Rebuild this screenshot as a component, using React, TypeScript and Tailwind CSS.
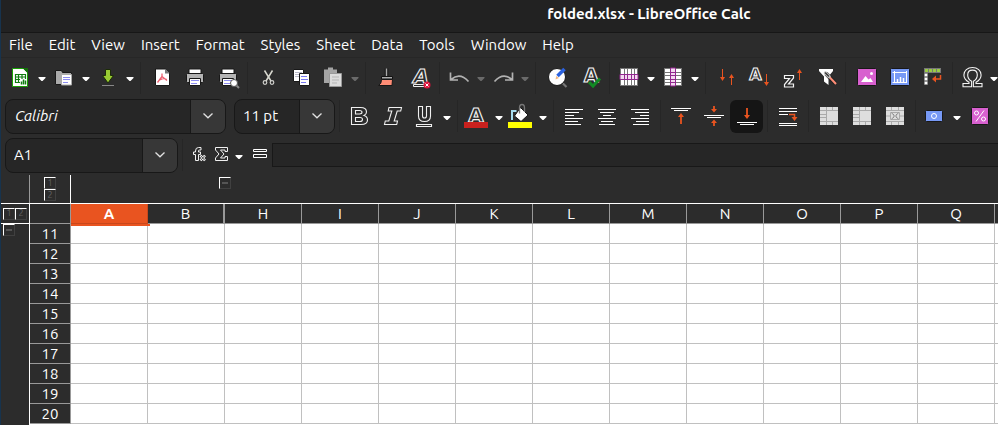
import type { ReactNode } from "react";

const menus = ["File", "Edit", "View", "Insert", "Format", "Styles", "Sheet", "Data", "Tools", "Window", "Help"];
const columns = ["A", "B", "H", "I", "J", "K", "L", "M", "N", "O", "P", "Q"];
const rows = [11, 12, 13, 14, 15, 16, 17, 18, 19, 20];

function Tool({ label, active, children }: { label: string; active?: boolean; children: ReactNode }) {
  return (
    <button
      type="button"
      aria-label={label}
      title={label}
      className={`shrink-0 rounded-md ${active ? "bg-[#151515]" : ""}`}
    >
      <svg width="33" height="33" viewBox="0 0 33 33" fill="none" className="block">
        {children}
      </svg>
    </button>
  );
}

function Drop({ label, dim }: { label: string; dim?: boolean }) {
  return (
    <button type="button" aria-label={label} className="shrink-0">
      <svg width="11" height="33" viewBox="0 0 11 33" className="block">
        <path d="M1.500 16h7v1l-3 3h-1l-3-3z" fill={dim ? "#6a6a6a" : "#fff"} />
      </svg>
    </button>
  );
}

function Sep() {
  return (
    <div className="flex h-8 w-2 shrink-0 justify-center">
      <div className="w-px bg-[#262626]" />
    </div>
  );
}

function Combo({ label, value, className, italic, pad }: { label: string; value: string; className: string; italic?: boolean; pad: string }) {
  return (
    <div className={`flex h-[35px] shrink-0 overflow-hidden rounded-lg border border-[#181818] bg-[#262626] ${className}`}>
      <input
        aria-label={label}
        defaultValue={value}
        className={`min-w-0 flex-1 bg-transparent text-[15px] text-white outline-none ${pad} ${italic ? "italic" : ""}`}
      />
      <button type="button" aria-label={`${label} list`} className="flex w-[35px] items-center justify-center border-l border-[#181818] bg-[#373737]">
        <svg width="12" height="8" viewBox="0 0 12 8" fill="none">
          <path d="M1.500 1.500 6 5.800l4.500-4.300" stroke="#e0e0e0" strokeWidth="1.300" />
        </svg>
      </button>
    </div>
  );
}

function Outlined({ x, y, size, children, italic }: { x: number; y: number; size: number; children: string; italic?: boolean }) {
  return (
    <text
      x={x}
      y={y}
      fontSize={size}
      fontWeight="bold"
      fontStyle={italic ? "italic" : "normal"}
      fontFamily="'DejaVu Sans', sans-serif"
      textAnchor="middle"
      fill="#2c2c2c"
      stroke="#f4f4f4"
      strokeWidth="1.1"
    >
      {children}
    </text>
  );
}

function Lines({ items }: { items: [number, number, number][] }) {
  return (
    <>
      {items.map(([x, y, w]) => (
        <rect key={`${x}-${y}`} x={x} y={y} width={w} height="1" fill="#fff" />
      ))}
    </>
  );
}

function Printer() {
  return (
    <>
      <path d="M12 13V8h12v5" fill="#fff" stroke="#181818" />
      <rect x="9.5" y="12.5" width="17" height="9" rx="1" fill="#b4b4b4" stroke="#181818" />
      <path d="M12.500 17.500h11v7h-11z" fill="#fff" stroke="#181818" />
      <path d="M14 19.500h8M14 22.500h6" stroke="#8d8df0" />
    </>
  );
}

function MergeGrid({ variant }: { variant: "merge" | "split" | "center" }) {
  return (
    <>
      <rect x="8" y="7" width="18" height="18" fill="#dedede" />
      {variant === "center" ? (
        <>
          <path d="M8 10.500h18M8 21.500h18M13.500 7v4M20.500 7v4M13.500 21v4M20.500 21v4M8 16h5M21 16h5" stroke="#aaa" />
          <path d="M12.500 12.500h9v7h-9z" stroke="#aaa" />
          <path d="M13.500 13l2.500 2v2l-2.500 2M20.500 13l-2.500 2v2l2.500 2" stroke="#888" />
        </>
      ) : (
        <path
          d={variant === "merge" ? "M8 10.500h18M8 21.500h18M14.500 7v18M20.500 7v4M20.500 21v4M8 14.500h6M8 17.500h6" : "M8 10.500h18M8 21.500h18M14.500 7v18M20.500 7v4M20.500 21v4M8 14.500h6M8 17.500h6"}
          stroke="#aaa"
        />
      )}
    </>
  );
}

function MainToolbar() {
  return (
    <div className="flex h-[39px] items-center overflow-hidden pl-[3px]">
      <Tool label="New">
        <path d="M9 7.500h10.500l4 4V25q0 .5-.5.500H9q-.5 0-.5-.5V8q0-.5.5-.5z" fill="#fff" stroke="#18a303" />
        <path d="M18.500 7h5.500v5.500z" fill="#146f0a" />
        <path d="M11.500 13.500h10v8h-10zM11.500 16h10M11.500 18.500h10M14.500 13.500v8M18 13.500v8" stroke="#107c10" strokeWidth="1.200" />
        <path d="M16 18h7v6h-7z" fill="#fff" />
        <path d="M17.500 23.500v-3M19.500 23.500v-5M21.500 23.500v-4" stroke="#107c10" strokeWidth="1.500" />
      </Tool>
      <Drop label="New options" />
      <Tool label="Open">
        <path d="M7.500 9.500h6l1 2h9v12h-16z" fill="#aaa" stroke="#181818" />
        <path d="M13.500 13.500h10v10.500h-10z" fill="#fff" stroke="#aaa" />
        <path d="M15 16.500h7M15 18.500h7M15 21.500h5" stroke="#8d8df0" />
      </Tool>
      <Drop label="Open options" />
      <Tool label="Save">
        <path d="M13.500 8.500h5v6h3L16 22l-5.500-7.500h3z" fill="#99cc33" stroke="#1c2c08" />
        <path d="M10 24.500h12" stroke="#888" />
      </Tool>
      <Drop label="Save options" />
      <Sep />
      <Tool label="Export as PDF">
        <path d="M11.500 8h10l4 4v12.500h-14z" fill="#fff" stroke="#181818" />
        <path d="M21 8v4.500h4.500z" fill="#777" />
        <path d="M18 12.500v3l-4.500 6M18 15.500l5 4M15.500 19l4-1.500 3.500 1" stroke="#ed6070" strokeWidth="1.300" />
      </Tool>
      <Tool label="Print"><Printer /></Tool>
      <Tool label="Print Preview">
        <Printer />
        <path d="m26 24 3 3" stroke="#888" strokeWidth="2" />
        <circle cx="24" cy="22" r="3.500" fill="#fff" stroke="#555" />
      </Tool>
      <Sep />
      <Tool label="Cut">
        <path d="M13.500 9.500 20 20M21.500 9.500 15 20" stroke="#d8d8cf" strokeWidth="1.500" />
        <circle cx="14" cy="21.500" r="1.800" stroke="#d0d0cc" strokeWidth="1.200" />
        <circle cx="21" cy="21.500" r="1.800" stroke="#d0d0cc" strokeWidth="1.200" />
      </Tool>
      <Tool label="Copy">
        <path d="M9.500 8.500h10v12h-10z" fill="#fff" stroke="#181818" />
        <path d="M11 11.500h7M11 13.500h7M11 15.500h5" stroke="#b9b9c9" />
        <path d="M15.500 12.500h10v12h-10z" fill="#fff" stroke="#181818" />
        <path d="M17 15.500h6M17 18.500h7M17 21.500h5" stroke="#7878f0" />
      </Tool>
      <Tool label="Paste">
        <path d="M7 8.500h4v-2h5v2h4V22H7z" fill="#a5a5a5" />
        <path d="M12.500 12.500h12v13h-12z" fill="#dcdcdc" stroke="#999" />
        <path d="M15 16h7M15 19h7M15 22h5" stroke="#b5b5b5" />
      </Tool>
      <Drop label="Paste options" dim />
      <Sep />
      <Tool label="Clone Formatting">
        <path d="M17.500 7.500v8" stroke="#111" strokeWidth="3.500" />
        <path d="M17.500 7.500v8" stroke="#aaa" strokeWidth="1.500" />
        <path d="M12.500 15.500h11v2.500h-11z" fill="#aaa" stroke="#111" />
        <path d="M12.500 18.500h11l-.5 6H9.500q3-1.500 3-6z" fill="#ff8d76" stroke="#181818" />
      </Tool>
      <Tool label="Clear Direct Formatting">
        <Outlined x={19} y={22} size={20} italic>A</Outlined>
        <path d="M11.500 23.500h12v2h-12z" stroke="#eee" />
        <circle cx="25" cy="24" r="3.500" fill="#dc143c" />
        <path d="m23.500 22.500 3 3m0-3-3 3" stroke="#fff" />
      </Tool>
      <Sep />
      <Tool label="Undo"><path d="M7.500 11.500v7.500h7.500M8 18.500q9-7.500 17.500 2" stroke="#b2b2b2" strokeWidth="1.700" /></Tool>
      <Drop label="Undo history" dim />
      <Tool label="Redo"><path d="M25.500 11.500v7.500h-7.500M25 18.500q-9-7.500-17.500 2" stroke="#b2b2b2" strokeWidth="1.700" /></Tool>
      <Drop label="Redo history" dim />
      <Sep />
      <Tool label="Find and Replace">
        <path d="m23.500 22 4 4" stroke="#777" strokeWidth="2.200" />
        <circle cx="18" cy="16" r="8.500" fill="#fff" stroke="#181818" />
        <path d="m18.500 15 7-7" stroke="#2b62df" strokeWidth="3.500" />
        <path d="m16.500 18.500.8-3.500 2.700 2z" fill="#f5b77d" />
      </Tool>
      <Tool label="Spelling">
        <Outlined x={19} y={21} size={19}>A</Outlined>
        <path d="m17 21 4 4 7-7.500" stroke="#128a24" strokeWidth="3" />
      </Tool>
      <Sep />
      <Tool label="Row">
        <rect x="7" y="7" width="18" height="18" fill="#fff" />
        <path d="M7 7.500h18M7 24.500h18M7.500 7v18M11.500 7v18M14.500 7v18M18.500 7v18M21.500 7v18M24.500 7v18" stroke="#777" />
        <path d="M7 13.500h18v5H7z" fill="#f3d9f0" stroke="#92278f" />
        <path d="M11.500 13v6M14.500 13v6M18.500 13v6M21.500 13v6" stroke="#92278f" />
      </Tool>
      <Drop label="Row options" />
      <Tool label="Column">
        <rect x="7" y="7" width="18" height="18" fill="#fff" />
        <path d="M7 7.500h18M7 11.500h18M7 14.500h18M7 18.500h18M7 21.500h18M7 24.500h18M7.500 7v18M24.500 7v18" stroke="#777" />
        <path d="M13.500 7v18h5V7z" fill="#f3d9f0" stroke="#92278f" />
        <path d="M13 11.500h6M13 14.500h6M13 18.500h6M13 21.500h6" stroke="#92278f" />
      </Tool>
      <Drop label="Column options" />
      <Sep />
      <Tool label="Sort">
        <path d="M13.500 8v8M22.500 16v8" stroke="#e95420" />
        <path d="M11 16h5l-2.500 4zM20 17h5l-2.500-4z" fill="#e95420" />
      </Tool>
      <Tool label="Sort Ascending">
        <Outlined x={13.5} y={19} size={16}>A</Outlined>
        <path d="M24.500 13v9" stroke="#e95420" />
        <path d="M22 21h5l-2.500 4z" fill="#e95420" />
      </Tool>
      <Tool label="Sort Descending">
        <path d="M9.500 14.500h9v2.500l-5 6h5v3h-9v-2.500l5-6h-5z" stroke="#f4f4f4" strokeWidth="1.200" />
        <path d="M24.500 12v7" stroke="#e95420" />
        <path d="M22 12h5l-2.500-4z" fill="#e95420" />
      </Tool>
      <Tool label="AutoFilter">
        <path d="M11 8h14v2l-4.500 5.500V24L16 20.500v-5L11 10z" fill="#fff" />
        <path d="m18 12.500 9.500 10" stroke="#222" strokeWidth="4" />
        <path d="m19.500 14 8.500 9" stroke="#ff8d76" strokeWidth="2" />
        <path d="m17.500 12 3.500 3.500" stroke="#bbb" strokeWidth="3.500" strokeLinecap="round" />
        <path d="m17.500 12 3 3" stroke="#333" strokeWidth="1.300" strokeLinecap="round" />
      </Tool>
      <Sep />
      <Tool label="Insert Image">
        <rect x="8.500" y="7.500" width="19" height="17" rx="1" fill="#d860cf" stroke="#181818" />
        <path d="m12 21 4.500-6 3 3.500 2-1.500 2.500 4z" fill="#fff" />
        <circle cx="22.500" cy="12.500" r="1.500" fill="#fff" />
      </Tool>
      <Tool label="Insert Chart">
        <rect x="8.500" y="7.500" width="19" height="17" rx="1" fill="#7799f5" stroke="#181818" />
        <path d="M12.500 10v12M10.500 21.500h14M10.500 11.500h14.500M24.500 10v12" stroke="#fff" />
        <path d="M15.500 21v-3M18.500 21v-5M21.500 21v-4" stroke="#fff" strokeWidth="1.500" />
      </Tool>
      <Tool label="Pivot Table">
        <path d="M9 7h17v5H13v12H9z" fill="#777" />
        <path d="M10 13h2v2h-2zM10 17h2v2h-2zM10 21h2v2h-2z" fill="#fff" stroke="#fff" strokeWidth=".5" />
        <path d="M10 8h3v3h-3zM14 8h3v3h-3zM18 8h3v3h-3zM22 8h3v3h-3z" fill="#9acb45" />
        <path d="M25.500 14v4h-6" stroke="#e95420" strokeWidth="1.500" />
        <path d="M21 14.500v7L17 18z" fill="#e95420" />
      </Tool>
      <Sep />
      <Tool label="Special Character">
        <path
          d="M7 22.500h6v-1.300C9.800 19.500 7.900 17 7.900 14c0-4.400 3.600-7.500 8.600-7.500s8.600 3.100 8.600 7.500c0 3-1.900 5.500-5.100 7.200v1.300h6v3.200h-8.600v-5.400c2.500-1.400 3.900-3.500 3.900-6.300 0-3.100-1.900-4.900-4.800-4.900s-4.800 1.800-4.800 4.900c0 2.800 1.400 4.900 3.900 6.300v5.400H7z"
          stroke="#f2f2f2"
          strokeWidth="1.100"
        />
      </Tool>
      <Drop label="Special characters" />
    </div>
  );
}

function FormatToolbar() {
  return (
    <div className="flex h-[38px] items-center overflow-hidden pl-1">
      <Combo label="Font Name" value="Calibri" className="mr-2 w-[221px]" pad="pl-[9px]" italic />
      <Combo label="Font Size" value="11 pt" className="w-[101px]" pad="pl-2" />
      <Sep />
      <Tool label="Bold">
        <path
          d="M8.500 7.500h9q6 0 6 4.500 0 2.500-2.500 3.500 3.500 1 3.500 4.500 0 4.500-6.500 4.500h-9.500zM12.500 10.500v3.500h4q2.500 0 2.500-1.700t-2.500-1.800zM12.500 17.500v4h4.500q2.500 0 2.500-2t-2.500-2z"
          stroke="#f0f0f0"
          strokeWidth="1.100"
        />
      </Tool>
      <Tool label="Italic">
        <path d="M13 7.500h12.500l-.8 3.500h-3.500l-3 10h3.300l-.8 3.500H8.500l.8-3.500h3.500l3-10h-3.600z" stroke="#f0f0f0" strokeWidth="1.100" />
      </Tool>
      <Tool label="Underline">
        <path d="M9.500 6.500h4v9.500q0 2 2 2t2-2V6.500h4V16q0 5.500-6 5.500t-6-5.500z" stroke="#f0f0f0" strokeWidth="1.100" />
        <path d="M7.500 24.500h15v2h-15z" stroke="#f0f0f0" strokeWidth="1.100" />
      </Tool>
      <Drop label="Underline styles" />
      <Sep />
      <Tool label="Font Color">
        <Outlined x={15} y={22} size={20}>A</Outlined>
        <rect x="3" y="22" width="24" height="6" fill="#c9211e" />
      </Tool>
      <Drop label="Font colors" />
      <Tool label="Highlighting">
        <rect x="3" y="22" width="24" height="6" fill="#ff0" />
        <path d="M7 20v-9h4.500" stroke="#a5dbee" strokeWidth="2" />
        <path d="m15.500 7.500 7.500 7.500-7 6.500-6.500-5.500z" fill="#fff" stroke="#181818" />
        <path d="M14.500 13.500V8q0-3.500 2.500-3.500T19.500 8v4" stroke="#777" strokeWidth="1.300" />
      </Tool>
      <Drop label="Highlight colors" />
      <Sep />
      <Tool label="Align Left"><Lines items={[[8, 9, 18], [8, 12, 14], [8, 15, 9], [8, 18, 18], [8, 21, 13], [8, 24, 16]]} /></Tool>
      <Tool label="Center Horizontally"><Lines items={[[8, 9, 18], [10, 12, 14], [13, 15, 8], [8, 18, 18], [11, 21, 12], [9, 24, 16]]} /></Tool>
      <Tool label="Align Right"><Lines items={[[8, 9, 18], [12, 12, 14], [17, 15, 9], [8, 18, 18], [13, 21, 13], [10, 24, 16]]} /></Tool>
      <Sep />
      <Tool label="Align Top">
        <Lines items={[[7, 8, 20], [10, 10, 14]]} />
        <path d="M17 16v8" stroke="#e95420" strokeWidth="1.800" /><path d="M14 17h6l-3-4z" fill="#e95420" />
      </Tool>
      <Tool label="Center Vertically">
        <Lines items={[[7, 15, 20], [10, 17, 14]]} />
        <path d="M17 6v4M17 22v4" stroke="#e95420" strokeWidth="1.800" />
        <path d="M14 9h6l-3 3.500zM14 23h6l-3-3.500z" fill="#e95420" />
      </Tool>
      <Tool label="Align Bottom" active>
        <Lines items={[[7, 22, 20], [10, 24, 14]]} />
        <path d="M17 8v8" stroke="#e95420" strokeWidth="1.800" /><path d="M14 15h6l-3 4z" fill="#e95420" />
      </Tool>
      <Sep />
      <Tool label="Wrap Text">
        <Lines items={[[8, 8, 18], [8, 11, 18], [8, 14, 9], [8, 23, 18], [8, 25, 18]]} />
        <path d="M18 14.500h5.500v3" stroke="#e95420" strokeWidth="1.500" /><path d="M20.500 17h6l-3 4z" fill="#e95420" />
      </Tool>
      <Sep />
      <Tool label="Merge and Center"><MergeGrid variant="merge" /></Tool>
      <Tool label="Merge Cells"><MergeGrid variant="split" /></Tool>
      <Tool label="Unmerge Cells"><MergeGrid variant="center" /></Tool>
      <Sep />
      <Tool label="Format as Currency">
        <rect x="6.500" y="10.500" width="17" height="11" rx="1" fill="#7799f5" stroke="#181818" />
        <circle cx="15" cy="16" r="2.500" stroke="#fff" />
      </Tool>
      <Drop label="Currency options" />
      <Tool label="Format as Percent">
        <rect x="8.500" y="7.500" width="17" height="17" rx="1" fill="#d860cf" stroke="#181818" />
        <circle cx="13.500" cy="13" r="2" stroke="#fff" />
        <circle cx="20.500" cy="19" r="2" stroke="#fff" />
        <path d="m13 21.500 8-11" stroke="#fff" />
      </Tool>
    </div>
  );
}

function FormulaBar() {
  return (
    <div className="flex h-10 items-center pl-1">
      <Combo label="Name Box" value="A1" className="w-[173px]" pad="pl-2" />
      <Sep />
      <button type="button" aria-label="Function Wizard" className="shrink-0">
        <svg width="24" height="33" viewBox="0 0 24 33" fill="none" className="block">
          <path d="M15 8.500h-2.500Q9.500 8.500 9.500 12v1h-2v2.500h2v6h3v-6h2V13h-2v-1q0-1 1-1H15z" stroke="#f0f0f0" />
          <path d="m14.500 16.500 4.500 5m0-5-4.500 5" stroke="#f0f0f0" strokeWidth="2.600" />
          <path d="m15 17 3.500 4m0-4-3.500 4" stroke="#2c2c2c" strokeWidth=".8" />
        </svg>
      </button>
      <button type="button" aria-label="Select Function" className="shrink-0">
        <svg width="24" height="33" viewBox="0 0 24 33" fill="none" className="block">
          <path d="M5.500 8.500h12v4H15v-1.500h-4.500l3.500 4-3.500 4H15v-1.500h2.500v4h-12V19l3.500-4-3.500-4z" stroke="#f0f0f0" />
        </svg>
      </button>
      <Drop label="Functions" />
      <button type="button" aria-label="Formula" className="shrink-0">
        <svg width="27" height="33" viewBox="0 0 27 33" fill="none" className="block">
          <path d="M8.500 10.500h13v2h-13zM8.500 15.500h13v3h-13z" stroke="#fff" />
        </svg>
      </button>
      <input aria-label="Input line" className="h-6 min-w-0 flex-1 border border-r-0 border-[#181818] bg-[#262626] px-1 text-[15px] text-white outline-none" />
    </div>
  );
}

function OutlineButton({ children, label }: { children: string; label: string }) {
  return (
    <button
      type="button"
      aria-label={label}
      className="flex size-3 shrink-0 items-center justify-center border border-t-white border-r-[#404040] border-b-[#404040] border-l-white text-[9px] leading-none text-[#606060]"
    >
      {children === "−" ? <span className="h-[2px] w-[6px] bg-[#555]" /> : children}
    </button>
  );
}

function Sheet() {
  return (
    <div className="flex min-h-0 flex-1 flex-col bg-white">
      <div className="flex h-[29px] shrink-0 border-b border-white bg-[#2c2c2c]">
        <div className="w-[29px] border-r border-[#999]" />
        <div className="flex w-[41px] flex-col items-center border-r border-white pt-[2px]">
          <OutlineButton label="Column level 1">1</OutlineButton>
          <OutlineButton label="Column level 2">2</OutlineButton>
        </div>
        <div className="pt-[2px] pl-[148px]">
          <OutlineButton label="Collapse columns">−</OutlineButton>
        </div>
      </div>
      <div className="flex min-h-0 flex-1">
        <div className="w-[29px] shrink-0 border-r border-white bg-[#2c2c2c]">
          <div className="flex h-5 items-center border-b border-white pl-[2px]">
            <OutlineButton label="Row level 1">1</OutlineButton>
            <OutlineButton label="Row level 2">2</OutlineButton>
          </div>
          <div className="pl-[2px]">
            <OutlineButton label="Collapse rows">−</OutlineButton>
          </div>
        </div>
        <div className="min-w-0 flex-1 overflow-hidden">
          <table className="w-full table-fixed border-separate border-spacing-0 text-[15px] leading-[19px] text-white">
            <thead>
              <tr>
                <td className="h-5 w-[41px] border-r border-b border-[#999] bg-[#2c2c2c] p-0" />
                {columns.map((c) => (
                  <th
                    key={c}
                    scope="col"
                    className={`relative h-5 w-[77px] border-b p-0 ${
                      c === "A"
                        ? "border-r border-[#c9481b] bg-[#e95420] font-bold"
                        : c === "B"
                          ? "border-r-2 border-[#999] bg-[#2c2c2c] font-normal"
                          : "border-r border-[#999] bg-[#2c2c2c] font-normal"
                    }`}
                  >
                    {c}
                    {c === "A" && <span className="absolute -right-[3px] -bottom-[3px] left-0 h-[2px] bg-[#e95420]" />}
                  </th>
                ))}
                <td className="border-b border-[#999] bg-[#2c2c2c] p-0" />
              </tr>
            </thead>
            <tbody>
              {rows.map((r) => (
                <tr key={r}>
                  <th scope="row" className="h-5 border-r border-b border-[#999] bg-[#2c2c2c] p-0 font-normal">{r}</th>
                  {columns.map((c) => (
                    <td key={c} className="border-r border-b border-[#c0c0c0] bg-white p-0" />
                  ))}
                  <td className="border-b border-[#c0c0c0] bg-white p-0" />
                </tr>
              ))}
            </tbody>
          </table>
        </div>
      </div>
    </div>
  );
}

export default function App() {
  return (
    <div className="flex h-screen flex-col overflow-hidden border-l border-[#17334d] bg-[#2c2c2c] font-['Ubuntu','Noto_Sans',sans-serif] text-white">
      <header className="flex h-[33px] shrink-0 items-center justify-center border-b border-[#171717] bg-[#222] pb-1 pl-[299px]">
        <h1 className="text-[15px] font-bold">folded.xlsx - LibreOffice Calc</h1>
      </header>
      <nav className="flex h-[25px] shrink-0 items-center gap-4 border-b border-[#272727] pl-2 text-[15px]">
        {menus.map((m) => (
          <button key={m} type="button">{m}</button>
        ))}
      </nav>
      <div className="shrink-0">
        <MainToolbar />
        <FormatToolbar />
        <FormulaBar />
      </div>
      <Sheet />
    </div>
  );
}
